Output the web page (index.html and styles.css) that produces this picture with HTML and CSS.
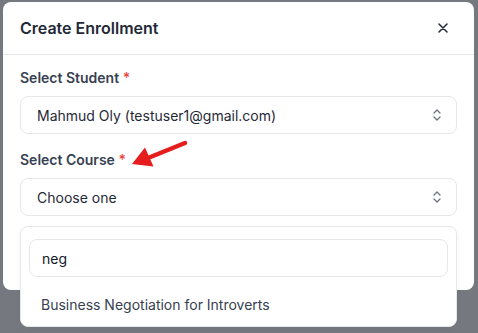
FILE: index.html
```html
<!DOCTYPE html>
<html>
<head>
<meta charset="utf-8">
<link rel="stylesheet" href="styles.css">
</head>
<body>
<div class="backdrop">
  <div class="modal">
    <div class="modal-header">
      <h2 class="title">Create Enrollment</h2>
      <button class="close" aria-label="Close">
        <svg width="10" height="10" viewBox="0 0 10 10"><path d="M1 1L9 9M9 1L1 9" stroke="#1f2937" stroke-width="1.5" stroke-linecap="round"/></svg>
      </button>
    </div>
    <div class="modal-body">
      <div class="field">
        <div class="label">Select Student <span class="req">*</span></div>
        <div class="select">
          <span>Mahmud Oly (testuser1@gmail.com)</span>
          <svg class="chev" width="10" height="14" viewBox="0 0 10 14"><path d="M2 5L5 2L8 5M2 9L5 12L8 9" fill="none" stroke="#6b7280" stroke-width="1.3" stroke-linecap="round" stroke-linejoin="round"/></svg>
        </div>
      </div>
      <div class="field course">
        <div class="label">Select Course <span class="req">*</span></div>
        <div class="select">
          <span>Choose one</span>
          <svg class="chev" width="10" height="14" viewBox="0 0 10 14"><path d="M2 5L5 2L8 5M2 9L5 12L8 9" fill="none" stroke="#6b7280" stroke-width="1.3" stroke-linecap="round" stroke-linejoin="round"/></svg>
        </div>
        <div class="dropdown">
          <div class="search">neg</div>
          <div class="option">Business Negotiation for Introverts</div>
        </div>
      </div>
    </div>
    <svg class="arrow" width="478" height="333" viewBox="0 0 478 333">
      <line x1="185" y1="143" x2="148" y2="158" stroke="#e51d1d" stroke-width="4.5" stroke-linecap="round"/>
      <polygon points="132,164 145,147.5 153.5,166.5" fill="#e51d1d"/>
    </svg>
  </div>
</div>
</body>
</html>
```
FILE: styles.css
```css
* { box-sizing: border-box; }
html, body { margin: 0; padding: 0; }
body {
  width: 478px;
  height: 333px;
  overflow: hidden;
  background: #76787f;
  font-family: Inter, "Noto Sans", sans-serif;
  color: #1f2937;
}
.backdrop {
  padding: 2px 4px 0 3px;
}
.modal {
  position: relative;
  width: 471px;
  height: 288px;
  background: #fff;
  border-radius: 8px;
}
.modal-header {
  height: 53px;
  padding: 0 17px;
  display: flex;
  align-items: center;
  justify-content: space-between;
  border-bottom: 1px solid #e5e7eb;
}
.title {
  margin: 0;
  font-size: 16px;
  font-weight: 600;
  color: #1f2937;
}
.close {
  border: 0;
  background: none;
  padding: 0;
  margin-right: 9px;
  display: flex;
}
.modal-body {
  padding: 13px 17px 0;
  display: flex;
  flex-direction: column;
  gap: 16px;
}
.field { position: relative; }
.label {
  font-size: 14px;
  line-height: 20px;
  font-weight: 600;
  color: #374151;
  margin-bottom: 8px;
}
.req { color: #ef4444; }
.select {
  height: 38px;
  border: 1px solid #e5e7eb;
  border-radius: 8px;
  padding: 0 14px 0 16px;
  display: flex;
  align-items: center;
  justify-content: space-between;
  font-size: 14px;
  color: #1f2937;
}
.dropdown {
  position: absolute;
  left: 0;
  right: 0;
  top: calc(100% + 10px);
  background: #fff;
  border: 1px solid #e5e7eb;
  border-radius: 8px;
  padding: 12px 8px 3px;
  box-shadow: 0 2px 6px rgba(0,0,0,0.04);
}
.search {
  height: 38px;
  border: 1px solid #e5e7eb;
  border-radius: 8px;
  padding: 0 12px;
  display: flex;
  align-items: center;
  font-size: 14px;
  color: #111827;
}
.option {
  margin-top: 10px;
  height: 36px;
  line-height: 36px;
  padding: 0 12px;
  font-size: 14px;
  color: #374151;
}
.arrow {
  position: absolute;
  left: -3px;
  top: -2px;
  pointer-events: none;
}
```
